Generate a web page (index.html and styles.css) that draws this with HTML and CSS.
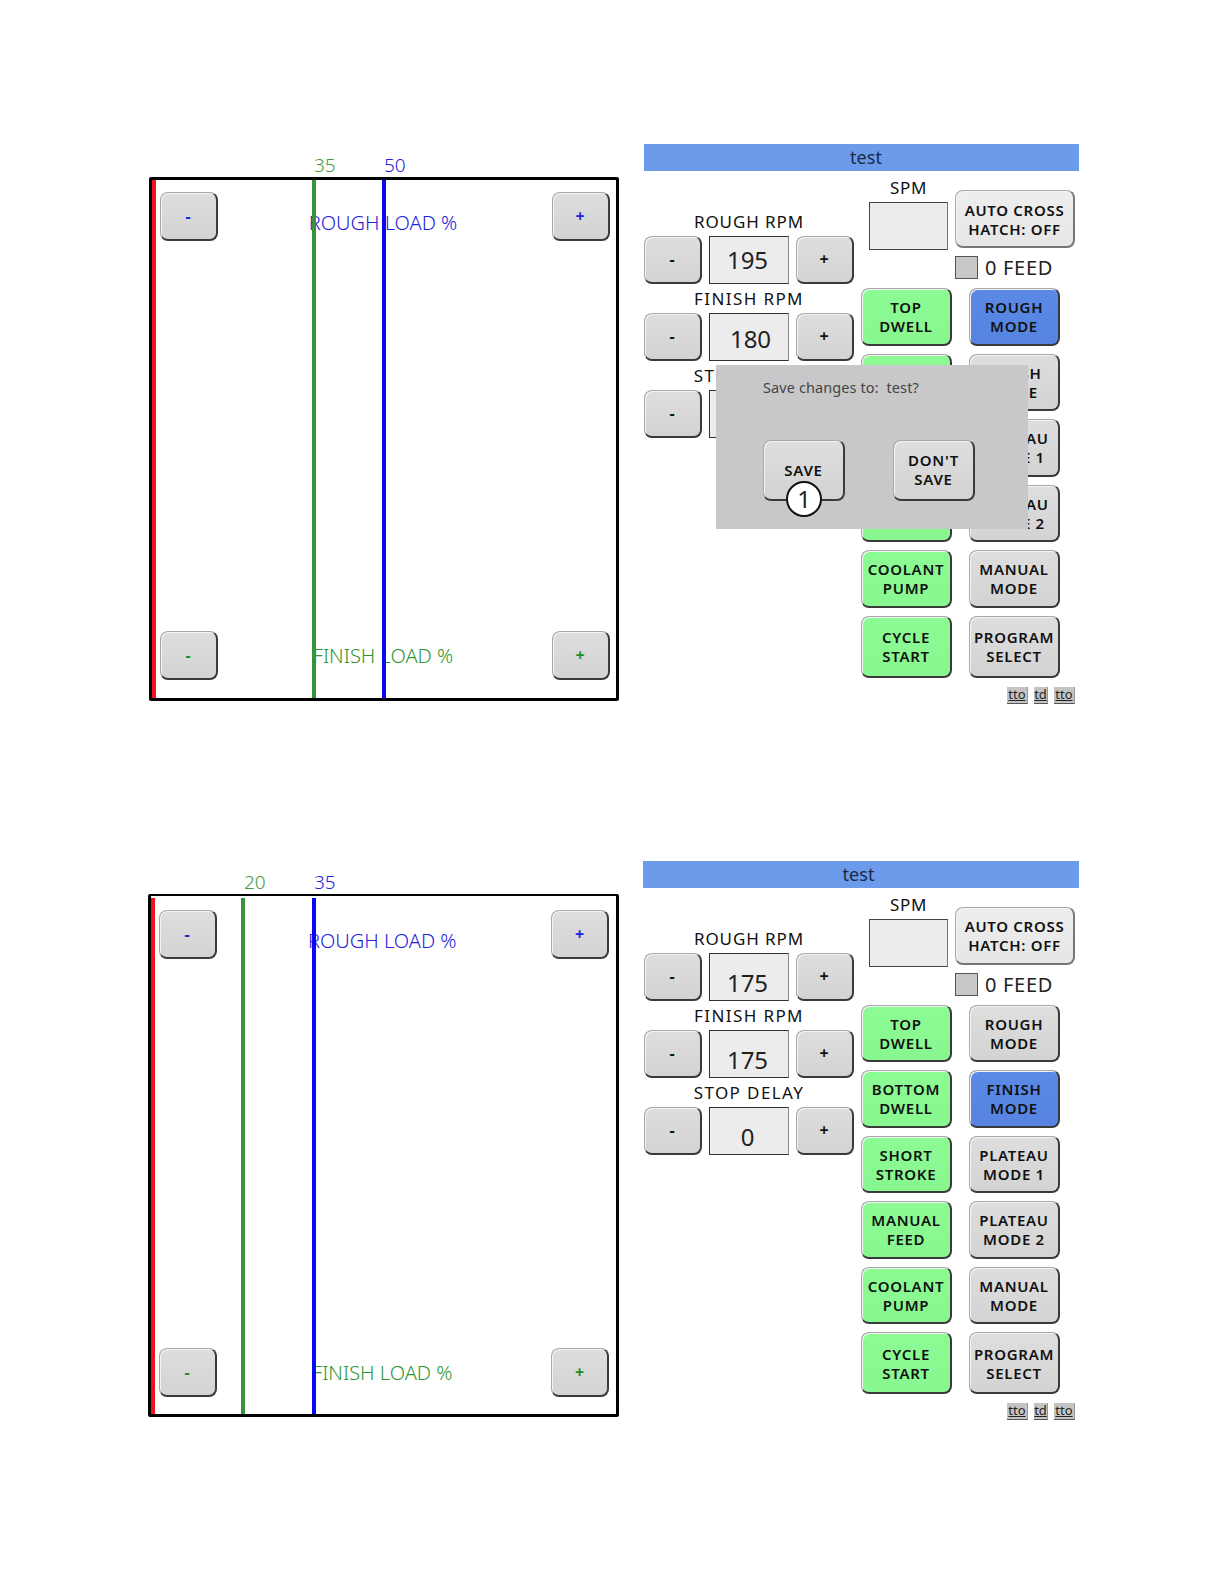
FILE: index.html
```html
<!DOCTYPE html>
<html lang="en">
<head>
<meta charset="utf-8">
<title>Load screens</title>
<link rel="stylesheet" href="styles.css">
</head>
<body>
<main class="page">

<section class="figure figure-one">
  <div class="chart-col">
    <div class="ticks">
      <span class="tick tick-green" style="left:165px">35</span>
      <span class="tick tick-blue" style="left:235px">50</span>
    </div>
    <div class="chart">
      <div class="chart-row chart-row-rough">
        <button class="key key-chart ink-blue">-</button>
        <span class="load-label ink-blue label-rough">ROUGH LOAD %</span>
        <button class="key key-chart ink-blue">+</button>
      </div>
      <div class="chart-row chart-row-finish">
        <button class="key key-chart ink-green">-</button>
        <span class="load-label ink-green">FINISH LOAD %</span>
        <button class="key key-chart ink-green">+</button>
      </div>
      <i class="line line-red" style="left:0"></i>
      <i class="line line-green" style="left:160px"></i>
      <i class="line line-blue" style="left:230px"></i>
    </div>
  </div>

  <div class="control">
    <h2 class="title title-one">test</h2>
    <div class="control-body">
      <div class="rpm-col">
        <div class="rpm-label">ROUGH RPM</div>
        <div class="rpm-row"><button class="key key-step">-</button><output class="value">195</output><button class="key key-step">+</button></div>
        <div class="rpm-label rpm-label-wide">FINISH RPM</div>
        <div class="rpm-row"><button class="key key-step">-</button><output class="value value-shift">180</output><button class="key key-step">+</button></div>
        <div class="rpm-label rpm-label-wide">STOP DELAY</div>
        <div class="rpm-row"><button class="key key-step">-</button><output class="value value-low">0</output><button class="key key-step">+</button></div>
      </div>
      <div class="side-col">
        <div class="status">
          <div class="spm">
            <div class="spm-label">SPM</div>
            <div class="spm-box"></div>
          </div>
          <div class="cross">
            <button class="key key-cross">AUTO CROSS<br>HATCH: OFF</button>
            <div class="feed"><span class="feed-box"></span><span class="feed-text">0 FEED</span></div>
          </div>
        </div>
        <div class="mode-grid">
          <button class="key key-mode key-on">TOP<br>DWELL</button>
          <button class="key key-mode key-active">ROUGH<br>MODE</button>
          <button class="key key-mode key-on">BOTTOM<br>DWELL</button>
          <button class="key key-mode">FINISH<br>MODE</button>
          <button class="key key-mode key-on">SHORT<br>STROKE</button>
          <button class="key key-mode">PLATEAU<br>MODE 1</button>
          <button class="key key-mode key-on">MANUAL<br>FEED</button>
          <button class="key key-mode">PLATEAU<br>MODE 2</button>
          <button class="key key-mode key-on">COOLANT<br>PUMP</button>
          <button class="key key-mode">MANUAL<br>MODE</button>
          <button class="key key-mode key-on">CYCLE<br>START</button>
          <button class="key key-mode">PROGRAM<br>SELECT</button>
        </div>
        <div class="tabs"><span class="tab tab-wide">tto</span><span class="tab">td</span><span class="tab tab-wide">tto</span></div>
      </div>
    </div>
    <div class="dialog">
      <p class="dialog-text">Save changes to:&nbsp; test?</p>
      <div class="dialog-actions">
        <button class="key key-dialog">SAVE</button>
        <button class="key key-dialog">DON'T<br>SAVE</button>
      </div>
      <span class="callout">1</span>
    </div>
  </div>
</section>

<section class="figure figure-two">
  <div class="chart-col">
    <div class="ticks">
      <span class="tick tick-green" style="left:96px">20</span>
      <span class="tick tick-blue" style="left:166px">35</span>
    </div>
    <div class="chart">
      <div class="chart-row chart-row-rough">
        <button class="key key-chart ink-blue">-</button>
        <span class="load-label ink-blue label-rough">ROUGH LOAD %</span>
        <button class="key key-chart ink-blue">+</button>
      </div>
      <div class="chart-row chart-row-finish">
        <button class="key key-chart ink-green">-</button>
        <span class="load-label ink-green">FINISH LOAD %</span>
        <button class="key key-chart ink-green">+</button>
      </div>
      <i class="line line-red" style="left:0"></i>
      <i class="line line-green" style="left:90px"></i>
      <i class="line line-blue" style="left:161px"></i>
    </div>
  </div>

  <div class="control">
    <h2 class="title title-two">test</h2>
    <div class="control-body">
      <div class="rpm-col">
        <div class="rpm-label">ROUGH RPM</div>
        <div class="rpm-row"><button class="key key-step">-</button><output class="value value-low">175</output><button class="key key-step">+</button></div>
        <div class="rpm-label rpm-label-wide">FINISH RPM</div>
        <div class="rpm-row"><button class="key key-step">-</button><output class="value value-low">175</output><button class="key key-step">+</button></div>
        <div class="rpm-label rpm-label-wide">STOP DELAY</div>
        <div class="rpm-row"><button class="key key-step">-</button><output class="value value-low">0</output><button class="key key-step">+</button></div>
      </div>
      <div class="side-col">
        <div class="status">
          <div class="spm">
            <div class="spm-label">SPM</div>
            <div class="spm-box"></div>
          </div>
          <div class="cross">
            <button class="key key-cross">AUTO CROSS<br>HATCH: OFF</button>
            <div class="feed"><span class="feed-box"></span><span class="feed-text">0 FEED</span></div>
          </div>
        </div>
        <div class="mode-grid">
          <button class="key key-mode key-on">TOP<br>DWELL</button>
          <button class="key key-mode">ROUGH<br>MODE</button>
          <button class="key key-mode key-on">BOTTOM<br>DWELL</button>
          <button class="key key-mode key-active">FINISH<br>MODE</button>
          <button class="key key-mode key-on">SHORT<br>STROKE</button>
          <button class="key key-mode">PLATEAU<br>MODE 1</button>
          <button class="key key-mode key-on">MANUAL<br>FEED</button>
          <button class="key key-mode">PLATEAU<br>MODE 2</button>
          <button class="key key-mode key-on">COOLANT<br>PUMP</button>
          <button class="key key-mode">MANUAL<br>MODE</button>
          <button class="key key-mode key-on">CYCLE<br>START</button>
          <button class="key key-mode">PROGRAM<br>SELECT</button>
        </div>
        <div class="tabs"><span class="tab tab-wide">tto</span><span class="tab">td</span><span class="tab tab-wide">tto</span></div>
      </div>
    </div>
  </div>
</section>

</main>
</body>
</html>
```

FILE: styles.css
```css
* { box-sizing: border-box; }
html, body { margin: 0; background: #fff; }
body { font-family: "Noto Sans", "DejaVu Sans", sans-serif; color: #111; }
button { font-family: inherit; }

.page { width: 1224px; height: 1584px; padding: 144px 0 0 148px; overflow: hidden; }

.figure { display: flex; justify-content: space-between; width: 931px; }
.figure-one { padding-left: 1px; margin-bottom: 157px; }

.chart-col { width: 470px; }
.figure-two .chart-col { width: 471px; }
.ticks { position: relative; height: 33px; }
.figure-two .ticks { height: 33.5px; }
.tick { position: absolute; bottom: 0; font-size: 19px; line-height: 23px; font-weight: 300; }
.tick-green { color: #3f9a3f; }
.tick-blue { color: #2222dd; }

.chart {
  position: relative;
  height: 524px;
  border: 3px solid #000;
  border-radius: 2px;
  padding: 12px 6px 18px 8px;
  display: flex;
  flex-direction: column;
  justify-content: space-between;
}
.figure-two .chart {
  height: 523px;
  border-top-width: 2px;
  padding: 14px 6.5px 17px 8px;
}
.chart-row { display: flex; justify-content: space-between; }
.chart-row-rough { align-items: flex-start; }
.chart-row-finish { align-items: center; }
.load-label { font-size: 20px; line-height: 26px; font-weight: 300; white-space: nowrap; margin-right: 4px; }
.label-rough { padding-top: 18px; }
.ink-blue { color: #2222dd; }
.ink-green { color: #2f962f; }
.line { position: absolute; top: 0; bottom: 0; width: 3.5px; }
.figure-two .line { top: 2px; }
.line-red { width: 4px; background: #f2111c; }
.line-green { background: #3a933a; }
.line-blue { background: #0a0af0; }

.key {
  display: block;
  padding: 0;
  border: 1px solid #a8a8a8;
  border-right: 2px solid #3a3a3a;
  border-bottom: 2px solid #3a3a3a;
  border-radius: 8px;
  background: linear-gradient(#dedede, #d3d3d3);
  box-shadow: inset 1px 1px 0 #f4f4f4;
  font-size: 15px;
  line-height: 19px;
  font-weight: 600;
  letter-spacing: 0.7px;
  text-align: center;
  white-space: nowrap;
  color: #111;
}
.key-chart { width: 58px; height: 49px; font-size: 16px; font-weight: 700; }
.ink-blue.key-chart { color: #2222dd; }
.ink-green.key-chart { color: #1f8f1f; }
.key-step { width: 58px; height: 48px; font-size: 16px; font-weight: 700; }

.control { position: relative; width: 435px; }
.title {
  height: 27px;
  margin: 0;
  background: #6c9bec;
  font-size: 18px;
  line-height: 27px;
  font-weight: 400;
  text-align: center;
  color: #1a2a44;
}
.title-one { padding-left: 9px; }
.title-two { padding-right: 5px; margin-left: -1px; }

.control-body { display: flex; gap: 7px; }
.rpm-col { width: 210px; padding-top: 40px; }
.rpm-label { font-size: 17px; line-height: 22px; letter-spacing: 0.9px; text-align: center; }
.rpm-label-wide { letter-spacing: 1.4px; }
.rpm-row { display: flex; gap: 7px; margin: 3px 0 4px; }
.value {
  width: 80px;
  height: 48px;
  padding-right: 3px;
  border: 1px solid #333;
  border-right-color: #888;
  background: #ececec;
  font-size: 24px;
  line-height: 46px;
  text-align: center;
  color: #222;
}
.value-shift { padding-left: 6px; padding-top: 2px; }
.value-low { padding-top: 6px; }

.side-col { width: 218px; }
.status { display: flex; gap: 7px; padding-left: 8px; }
.spm { width: 79px; padding-top: 6px; }
.spm-label { font-size: 17px; line-height: 22px; letter-spacing: 0.6px; text-align: center; margin-bottom: 3px; }
.spm-box { height: 48px; border: 1px solid #444; border-right-color: #777; background: #ececec; }
.cross { padding-top: 19px; }
.key-cross { width: 120px; height: 58px; padding-top: 2px; background: linear-gradient(#eeeeee, #e6e6e6); border-right-color: #777; border-bottom-color: #777; }
.feed { display: flex; align-items: center; gap: 7px; margin-top: 8px; }
.feed-box { width: 23px; height: 23px; border: 1px solid #555; background: #c8c8c8; }
.feed-text { font-size: 20px; line-height: 23px; letter-spacing: 0.7px; color: #222; }

.mode-grid {
  display: grid;
  grid-template-columns: 91px 91px;
  grid-template-rows: repeat(5, 57.5px) 62px;
  column-gap: 17px;
  row-gap: 8px;
  margin-top: 9px;
}
.key-mode { width: 100%; height: 100%; padding-top: 2px; }
.key-on { background: linear-gradient(#8cfb94, #88f790); }
.key-active { background: linear-gradient(#5a8ae6, #5684e0); }

.tabs { display: flex; justify-content: flex-end; gap: 6px; padding-right: 4px; margin-top: 9px; }
.tab {
  width: 14px;
  height: 17px;
  background: #c4c4c4;
  border-bottom: 1px solid #555;
  border-right: 1px solid #999;
  font-size: 13px;
  line-height: 15px;
  text-align: center;
  text-decoration: underline;
  color: #222;
}
.tab-wide { width: 21px; }

.dialog {
  position: absolute;
  left: 72px;
  top: 221px;
  width: 312px;
  height: 164px;
  padding: 12px 0 0 47px;
  background: #c8c8ca;
}
.dialog-text { margin: 0; font-size: 14.5px; line-height: 20px; letter-spacing: 0.1px; color: #444; }
.dialog-actions { display: flex; gap: 48px; margin-top: 43px; }
.key-dialog { width: 82px; height: 61px; }
.callout {
  position: absolute;
  left: 70px;
  top: 116px;
  width: 36px;
  height: 36px;
  border: 2px solid #111;
  border-radius: 50%;
  background: #fff;
  font-size: 24px;
  line-height: 31px;
  text-align: center;
  color: #222;
}
```
